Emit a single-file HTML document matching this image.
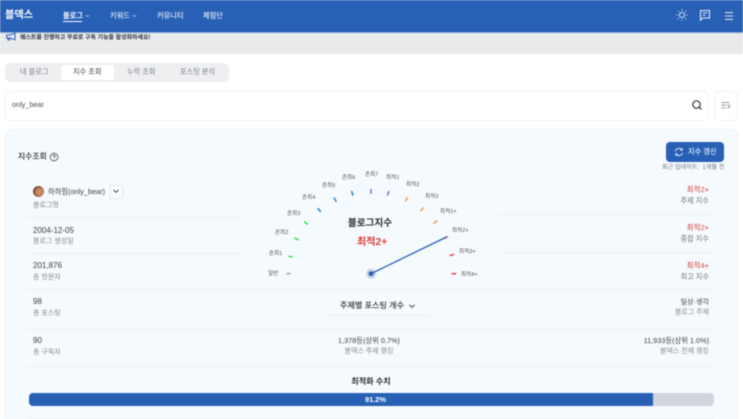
<!DOCTYPE html>
<html lang="ko"><head><meta charset="utf-8"><title>블덱스</title>
<style>
html,body{margin:0;padding:0;width:743px;height:419px;overflow:hidden;background:#fff}
#r{position:absolute;left:0;top:0;width:743px;height:419px;overflow:hidden;font-family:"Liberation Sans","Noto Sans CJK KR",sans-serif;color:#333;filter:blur(.45px)}
#r div,#r svg{position:absolute}
.t{white-space:nowrap;line-height:14px;height:14px;font-size:7.6px}
.c{transform:translateX(-50%)}
.g{color:#858a92;font-size:7px}
.d{color:#3a3f47;font-size:8px}
.m{color:#3a3f47;font-size:7.3px}
.red{color:#d5403f;font-size:7.5px}
.l{height:1px;background:#e8edf1}
.n{color:#e4ebf6;font-size:7.2px;font-weight:700;top:9px}
.tab{color:#7b8088;font-size:7.2px;top:65px}
.k{color:#555;font-size:5.6px}
</style></head><body><div id="r">

<div style="left:0;top:0;width:743px;height:32px;background:#2760b5"></div>
<div style="left:0;top:32px;width:743px;height:1px;background:#7fa2d6"></div>
<div style="left:0;top:33px;width:743px;height:21px;background:#e9eaec"></div>

<div class="t" style="left:5px;top:9px;color:#fff;font-size:10.2px;font-weight:700">블덱스</div>
<div class="t n" style="left:63px;color:#fff">블로그</div>
<div style="left:63px;top:20.5px;width:19px;height:1px;background:#fff"></div>
<svg style="left:85px;top:14px" width="5" height="4" viewBox="0 0 5 4"><path d="M.7 1 2.5 2.8 4.3 1" fill="none" stroke="#b9cdea" stroke-width=".7"/></svg>
<div class="t n" style="left:110px;font-weight:500">키워드</div>
<svg style="left:132px;top:14px" width="5" height="4" viewBox="0 0 5 4"><path d="M.7 1 2.5 2.8 4.3 1" fill="none" stroke="#b9cdea" stroke-width=".7"/></svg>
<div class="t n" style="left:157px;font-weight:500">커뮤니티</div>
<div class="t n" style="left:203px;font-weight:500">체험단</div>

<svg style="left:675px;top:8px" width="14" height="14" viewBox="0 0 14 14" fill="none" stroke="#d6e2f4" stroke-width="1"><circle cx="7" cy="7" r="2.6"/><path d="M7 1v1.6M7 11.4V13M1 7h1.6M11.4 7H13M2.8 2.8l1.1 1.1M10.1 10.1l1.1 1.1M2.8 11.2l1.1-1.1M10.1 3.9l1.1-1.1" stroke-width=".8"/></svg>
<svg style="left:698px;top:8px" width="14" height="14" viewBox="0 0 14 14" fill="none" stroke="#e4ecf8" stroke-width="1.1"><path d="M2.5 2.5h9v7.5H5L2.5 12.2z"/><path d="M4.6 5h4.8M4.6 7.3h3.2" stroke-width=".9"/></svg>
<svg style="left:723px;top:9.5px" width="12" height="12" viewBox="0 0 12 12" fill="none" stroke="#d6e2f4" stroke-width="1.1"><path d="M2 2.6h8M2 6h8M2 9.4h8"/></svg>

<svg style="left:5px;top:32px" width="12" height="10" viewBox="0 0 12 10" fill="none" stroke="#2760b5" stroke-width="1"><path d="M10 1.2v6.6L5 6H1.6V3H5z"/><path d="M3 6v2h1.6V6.2"/></svg>
<div class="t" style="left:20px;top:31px;font-size:5.95px;font-weight:700;color:#2e3238">퀘스트를 진행하고 무료로 구독 기능을 활성화하세요!</div>

<div style="left:5px;top:63px;width:224px;height:19px;border-radius:5px;background:#eeeff1"></div>
<div style="left:61px;top:65px;width:53px;height:15px;border-radius:3px;background:#fff"></div>
<div class="t tab" style="left:20px">내 블로그</div>
<div class="t tab" style="left:73px;color:#3a3f47">지수 조회</div>
<div class="t tab" style="left:127px">누락 조회</div>
<div class="t tab" style="left:180px">포스팅 분석</div>

<div style="left:5px;top:91px;width:702px;height:28px;border:1px solid #f0f1f3;border-radius:5px;background:#fff"></div>
<div class="t" style="left:12px;top:98px;font-size:7.3px;color:#4b4f55">only_bear</div>
<svg style="left:691px;top:99px" width="12" height="12" viewBox="0 0 12 12" fill="none" stroke="#333" stroke-width="1.2"><circle cx="5.5" cy="5.5" r="3.7"/><path d="M8.2 8.2 10.4 10.4"/></svg>
<div style="left:714px;top:91px;width:22px;height:28px;border:1px solid #f0f1f3;border-radius:5px;background:#fff"></div>
<svg style="left:720px;top:100px" width="11" height="11" viewBox="0 0 11 11" fill="none" stroke="#80858c" stroke-width=".8"><path d="M1.5 2.5h8M1.5 5.2h4.5M1.5 8h4M7 7.6h2.5M7.2 5.2h2.3v2.4"/></svg>

<div style="left:5px;top:129px;width:731px;height:300px;border:1px solid #eef2f5;border-radius:7px;background:#f5fafe"></div>

<div class="t" style="left:18px;top:150px;font-size:7.8px;font-weight:500;color:#2a2d32">지수조회</div>
<svg style="left:49px;top:152px" width="10" height="10" viewBox="0 0 10 10" fill="none" stroke="#444" stroke-width=".8"><circle cx="5" cy="5" r="3.9"/><path d="M3.8 4.1c0-1.6 2.5-1.6 2.5 0 0 .9-1.3.9-1.3 1.7"/><path d="M5 6.8v.6"/></svg>

<div style="left:666px;top:142px;width:58px;height:20px;border-radius:4px;background:#2760b5"></div>
<svg style="left:674px;top:147px" width="10" height="10" viewBox="0 0 10 10" fill="none" stroke="#e8effa" stroke-width=".9"><path d="M1.5 4.2A3.6 3.6 0 0 1 8 3M8.5 5.8A3.6 3.6 0 0 1 2 7"/><path d="M8.2 1.2V3.2H6.2M1.8 8.8V6.8H3.8"/></svg>
<div class="t" style="left:688px;top:145px;font-size:7.2px;color:#e8effa;font-weight:500">지수 갱신</div>
<div class="t" style="left:662px;top:161px;font-size:6.1px;color:#6f747c">최근 업데이트: &nbsp;1개월 전</div>

<div style="left:33px;top:186px;width:11px;height:11px;border-radius:50%;background:radial-gradient(circle at 60% 55%,#c98c62 0 35%,#6b4226 70%)"></div>
<div class="t d" style="left:48px;top:185px;font-size:7.3px">하하핌(only_bear)</div>
<div style="left:110px;top:185px;width:11px;height:12px;border:1px solid #e6e9ed;border-radius:3px;background:#fbfcfd"></div>
<svg style="left:112px;top:188px" width="8" height="7" viewBox="0 0 8 7"><path d="M1.6 2 4 4.4 6.4 2" fill="none" stroke="#333" stroke-width=".9"/></svg>
<div class="t g" style="left:33px;top:199px">블로그명</div>
<div class="l" style="left:28px;top:217px;width:215px"></div>
<div class="t d" style="left:33px;top:224px">2004-12-05</div>
<div class="t g" style="left:33px;top:235px">블로그 생성일</div>
<div class="l" style="left:28px;top:253px;width:215px"></div>
<div class="t d" style="left:33px;top:259px">201,876</div>
<div class="t g" style="left:33px;top:271px">총 방문자</div>
<div class="l" style="left:28px;top:289px;width:686px"></div>
<div class="t d" style="left:33px;top:295px">98</div>
<div class="t g" style="left:33px;top:307px">총 포스팅</div>
<div class="l" style="left:28px;top:329px;width:686px"></div>
<div class="t d" style="left:33px;top:334px">90</div>
<div class="t g" style="left:33px;top:346px">총 구독자</div>
<div class="l" style="left:28px;top:366px;width:686px"></div>

<div class="t red" style="right:34px;top:183px">최적2+</div>
<div class="t g" style="right:34px;top:194px;color:#6f747c;font-size:7.2px">주제 지수</div>
<div class="l" style="left:500px;top:214px;width:214px"></div>
<div class="t red" style="right:34px;top:221px">최적2+</div>
<div class="t g" style="right:34px;top:232px;color:#6f747c;font-size:7.2px">종합 지수</div>
<div class="l" style="left:500px;top:252px;width:214px"></div>
<div class="t red" style="right:34px;top:259px">최적4+</div>
<div class="t g" style="right:34px;top:270px;color:#6f747c;font-size:7.2px">최고 지수</div>

<svg style="left:0;top:0" width="743" height="419" viewBox="0 0 743 419" fill="none" stroke-width="1.5">
<path d="M286.5 273.7h4" stroke="#9a9ea5"/>
<path d="M288.5 256.2l4.2 .8" stroke="#2fe04d"/>
<path d="M294.5 237.8l4.2 2.4" stroke="#2fe04d"/>
<path d="M304.2 221.4l3.6 3.2" stroke="#2fe04d"/>
<path d="M317.6 208.2l3.2 3.6" stroke="#2b7fc4"/>
<path d="M334 197.6l2.4 4.2" stroke="#2b7fc4"/>
<path d="M351.6 191l1.4 4.6" stroke="#2b7fc4"/>
<path d="M371 189v4.8" stroke="#9b59d0"/>
<path d="M388.8 191l-1.2 4.6" stroke="#9b59d0"/>
<path d="M407.6 197.2l-2.4 4.2" stroke="#f0a040"/>
<path d="M423.8 207.4l-3.4 3.6" stroke="#f0a040"/>
<path d="M437.2 220.6l-3.8 3" stroke="#f0a040"/>
<path d="M448 236.4l-4 2.2" stroke="#e04444"/>
<path d="M454 254.4l-4.4 1.2" stroke="#e04444"/>
<path d="M456.4 273.7h-5" stroke="#e04444"/>
<circle cx="371" cy="273.7" r="5" fill="#c9d4e8" stroke="none"/>
<path d="M371 273.7 446.5 237" stroke="#2760b5" stroke-width="1.3"/>
<circle cx="371" cy="273.7" r="2.4" fill="#2760b5" stroke="none"/>
</svg>

<div class="t k" style="left:268px;top:267px">일반</div>
<div class="t k" style="left:269px;top:247px">존최1</div>
<div class="t k" style="left:275px;top:226px">존최2</div>
<div class="t k" style="left:287px;top:207px">존최3</div>
<div class="t k" style="left:302px;top:191px">존최4</div>
<div class="t k" style="left:322px;top:179px">존최5</div>
<div class="t k" style="left:342px;top:171px">존최6</div>
<div class="t k" style="left:365px;top:168px">존최7</div>
<div class="t k" style="left:386px;top:171px">최적1</div>
<div class="t k" style="left:406px;top:178px">최적2</div>
<div class="t k" style="left:425px;top:190px">최적3</div>
<div class="t k" style="left:440px;top:205px">최적1+</div>
<div class="t k" style="left:452px;top:224px">최적2+</div>
<div class="t k" style="left:459px;top:245px">최적3+</div>
<div class="t k" style="left:461px;top:268px">최적4+</div>

<div class="t c" style="left:370px;top:217px;font-size:9.6px;font-weight:700;color:#2a2d32">블로그지수</div>
<div class="t c" style="left:372px;top:236px;font-size:10.2px;font-weight:700;color:#e03c3c">최적2+</div>

<div class="t" style="left:340px;top:299px;font-size:8.1px;font-weight:500;color:#2f3338">주제별 포스팅 개수</div>
<svg style="left:408px;top:303px" width="8" height="7" viewBox="0 0 8 7"><path d="M1.4 1.8 4 4.4 6.6 1.8" fill="none" stroke="#333" stroke-width=".9"/></svg>
<div class="l" style="left:325px;top:315px;width:107px"></div>

<div class="t c m" style="left:369px;top:334px">1,378등(상위 0.7%)</div>
<div class="t c g" style="left:369px;top:345px">블덱스 주제 랭킹</div>
<div class="t m" style="right:34px;top:295px;font-size:7.1px">일상·생각</div>
<div class="t g" style="right:34px;top:306px">블로그 주제</div>
<div class="t m" style="right:34px;top:334px">11,933등(상위 1.0%)</div>
<div class="t g" style="right:34px;top:345px">블덱스 전체 랭킹</div>

<div class="t c" style="left:371px;top:375px;font-size:8.1px;font-weight:700;color:#2a2d32">최적화 수치</div>
<div style="left:29px;top:393px;width:685px;height:12.5px;border-radius:4px;background:#d1d5db;overflow:hidden"><div style="left:0;top:0;width:624px;height:13px;background:#2760b5"></div></div>
<div class="t c" style="left:375.5px;top:392.5px;font-size:7.4px;font-weight:700;color:#fff">91.2%</div>
<div class="l" style="left:28px;top:418px;width:686px"></div>

</div></body></html>
